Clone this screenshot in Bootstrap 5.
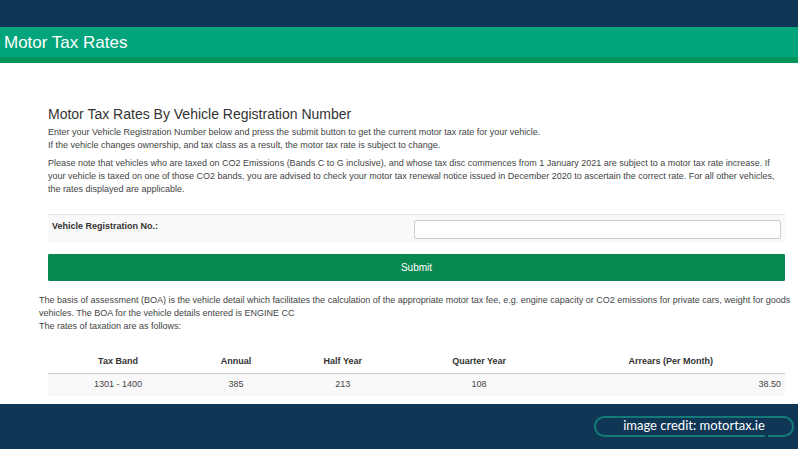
<!DOCTYPE html>
<html lang="en">
<head>
<meta charset="utf-8">
<meta name="viewport" content="width=device-width, initial-scale=1">
<title>Motor Tax Rates</title>
<link href="https://cdn.jsdelivr.net/npm/bootstrap@5.3.0/dist/css/bootstrap.min.css" rel="stylesheet">
<style>
body { font-family: "Liberation Sans", Arial, sans-serif; font-size: 9px; line-height: 13px; color: #444; background: #0f3655; }
.page-top { height: 27px; }
.title-bar { background: #02a57b; border-bottom: 6px solid #009459; padding: 6px 4px 4px; }
.title-bar h1 { font-size: 17px; line-height: 20px; color: #fff; }
.sheet { padding: 43px 0 8px; }
.inset-block { margin: 0 13px 0 48px; }
.inset-block h2 { font-size: 14px; line-height: 16px; color: #333; margin-bottom: 4px; }
.intro { margin-bottom: 5px; }
.reg-row { background: #f9f9f9; border-top: 1px solid #e4e4e4; padding: 5px 4px 4px; margin-top: 18px; }
.reg-row label { color: #333; }
.reg-field { width: 367px; max-width: 60%; }
.reg-row input { height: 19px; font-size: 9px; padding: 2px 6px; border: 1px solid #ccc; border-radius: 2px; }
.btn-submit { background: #078850; border: 1px solid #078850; color: #fff; font-size: 10px; line-height: 13px; padding: 6px; border-radius: 1px; margin-top: 11px; }
.btn-submit:hover { background: #06703f; color: #fff; }
.basis { margin: 13px 4px 17px 39px; }
.rates { --bs-table-color: #444; color: #444; }
.rates > thead th { padding: 5px 4px; color: #333; border-bottom: 1px solid #ccc; background: #fff; }
.rates > tbody td { padding: 4px 4px 5px; background: #f9f9f9; }
.col-band { width: 19%; } .col-annual { width: 13%; } .col-half { width: 16%; } .col-quarter { width: 21%; }
.page-end { padding: 12px 4px; }
.credit { position: relative; width: 200px; padding: 0 0 2px; font-family: Lato, sans-serif; font-size: 13px; line-height: 19px; color: #fff; text-align: center; }
.credit svg { position: absolute; inset: 0; width: 100%; height: 100%; }
.credit span { position: relative; }
</style>
<script src="https://cdn.jsdelivr.net/npm/bootstrap@5.3.0/dist/js/bootstrap.bundle.min.js" defer></script>
</head>
<body>
<div class="page-top"></div>
<header class="title-bar"><h1 class="fw-normal mb-0">Motor Tax Rates</h1></header>
<main class="sheet bg-white">
  <section class="inset-block">
    <h2 class="fw-normal">Motor Tax Rates By Vehicle Registration Number</h2>
    <p class="intro">Enter your Vehicle Registration Number below and press the submit button to get the current motor tax rate for your vehicle.<br>If the vehicle changes ownership, and tax class as a result, the motor tax rate is subject to change.</p>
    <p class="mb-0">Please note that vehicles who are taxed on CO2 Emissions (Bands C to G inclusive), and whose tax disc commences from 1 January 2021 are subject to a motor tax rate increase. If your vehicle is taxed on one of those CO2 bands, you are advised to check your motor tax renewal notice issued in December 2020 to ascertain the correct rate. For all other vehicles, the rates displayed are applicable.</p>
    <form>
      <div class="reg-row d-flex justify-content-between">
        <label for="reg" class="fw-bold">Vehicle Registration No.:</label>
        <div class="reg-field"><input id="reg" type="text" class="form-control"></div>
      </div>
      <button type="button" class="btn btn-submit d-block w-100">Submit</button>
    </form>
  </section>
  <p class="basis">The basis of assessment (BOA) is the vehicle detail which facilitates the calculation of the appropriate motor tax fee, e.g. engine capacity or CO2 emissions for private cars, weight for goods vehicles. The BOA for the vehicle details entered is ENGINE CC<br>The rates of taxation are as follows:</p>
  <section class="inset-block">
    <table class="table table-borderless rates mb-0 text-center">
      <thead><tr><th scope="col" class="col-band">Tax Band</th><th scope="col" class="col-annual">Annual</th><th scope="col" class="col-half">Half Year</th><th scope="col" class="col-quarter">Quarter Year</th><th scope="col">Arrears (Per Month)</th></tr></thead>
      <tbody><tr><td>1301 - 1400</td><td>385</td><td>213</td><td>108</td><td class="text-end">38.50</td></tr></tbody>
    </table>
  </section>
</main>
<footer class="page-end d-flex justify-content-end">
  <div class="credit">
    <svg viewBox="0 0 200 21" fill="none" stroke="#147a78" stroke-width="2" stroke-linecap="round" aria-hidden="true"><path d="M170 20H11C5 20 1 16 1 10.500S5 1 11 1H189C195 1 199 5 199 10.500S195 20 189 20H175"/></svg>
    <span>image credit: motortax.ie</span>
  </div>
</footer>
</body>
</html>
